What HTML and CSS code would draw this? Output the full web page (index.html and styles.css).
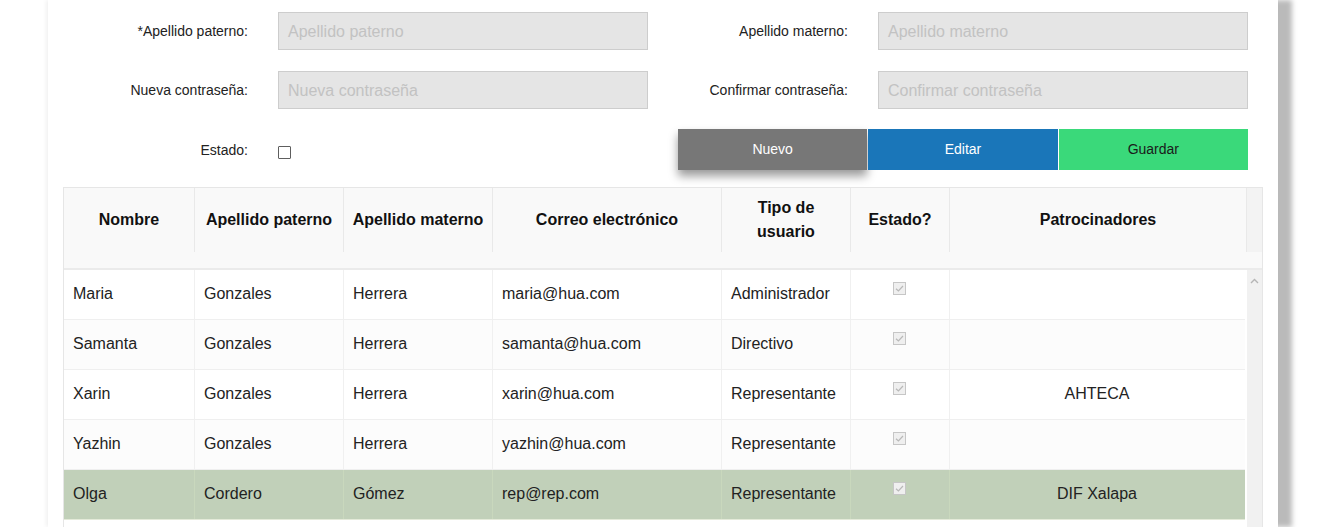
FILE: index.html
```html
<!DOCTYPE html>
<html lang="es">
<head>
<meta charset="utf-8">
<link rel="stylesheet" href="styles.css">
</head>
<body>
<div class="page">
  <div class="card">
    <div class="form">
      <label class="lbl">*Apellido paterno:</label>
      <div class="inp">Apellido paterno</div>
      <label class="lbl">Apellido materno:</label>
      <div class="inp">Apellido materno</div>

      <label class="lbl">Nueva contraseña:</label>
      <div class="inp">Nueva contraseña</div>
      <label class="lbl">Confirmar contraseña:</label>
      <div class="inp">Confirmar contraseña</div>

      <label class="lbl">Estado:</label>
      <div class="chkcell"><span class="chk"></span></div>
      <div class="btns">
        <div class="btn nuevo">Nuevo</div>
        <div class="btn editar">Editar</div>
        <div class="btn guardar">Guardar</div>
      </div>
    </div>

    <div class="table">
      <div class="thead">
        <div class="th">Nombre</div>
        <div class="th">Apellido paterno</div>
        <div class="th">Apellido materno</div>
        <div class="th">Correo electrónico</div>
        <div class="th">Tipo de<br>usuario</div>
        <div class="th">Estado?</div>
        <div class="th">Patrocinadores</div>
        <div class="th filler"></div>
      </div>
      <div class="tbody">
        <div class="rows">
          <div class="tr">
            <div class="td">Maria</div><div class="td">Gonzales</div><div class="td">Herrera</div><div class="td">maria@hua.com</div><div class="td">Administrador</div>
            <div class="td cbox"><span class="dchk"><svg viewBox="0 0 13 13" width="13" height="13"><path d="M3 6.8 L5.4 9 L10 4" fill="none" stroke="#b8b8b8" stroke-width="1.2"/></svg></span></div>
            <div class="td center"></div>
          </div>
          <div class="tr even">
            <div class="td">Samanta</div><div class="td">Gonzales</div><div class="td">Herrera</div><div class="td">samanta@hua.com</div><div class="td">Directivo</div>
            <div class="td cbox"><span class="dchk"><svg viewBox="0 0 13 13" width="13" height="13"><path d="M3 6.8 L5.4 9 L10 4" fill="none" stroke="#b8b8b8" stroke-width="1.2"/></svg></span></div>
            <div class="td center"></div>
          </div>
          <div class="tr">
            <div class="td">Xarin</div><div class="td">Gonzales</div><div class="td">Herrera</div><div class="td">xarin@hua.com</div><div class="td">Representante</div>
            <div class="td cbox"><span class="dchk"><svg viewBox="0 0 13 13" width="13" height="13"><path d="M3 6.8 L5.4 9 L10 4" fill="none" stroke="#b8b8b8" stroke-width="1.2"/></svg></span></div>
            <div class="td center">AHTECA</div>
          </div>
          <div class="tr even">
            <div class="td">Yazhin</div><div class="td">Gonzales</div><div class="td">Herrera</div><div class="td">yazhin@hua.com</div><div class="td">Representante</div>
            <div class="td cbox"><span class="dchk"><svg viewBox="0 0 13 13" width="13" height="13"><path d="M3 6.8 L5.4 9 L10 4" fill="none" stroke="#b8b8b8" stroke-width="1.2"/></svg></span></div>
            <div class="td center"></div>
          </div>
          <div class="tr sel">
            <div class="td">Olga</div><div class="td">Cordero</div><div class="td">Gómez</div><div class="td">rep@rep.com</div><div class="td">Representante</div>
            <div class="td cbox"><span class="dchk"><svg viewBox="0 0 13 13" width="13" height="13"><path d="M3 6.8 L5.4 9 L10 4" fill="none" stroke="#b8b8b8" stroke-width="1.2"/></svg></span></div>
            <div class="td center">DIF Xalapa</div>
          </div>
        </div>
        <div class="scroll">
          <svg class="arrow" viewBox="0 0 9 6" width="9" height="6"><path d="M1 5 L4.5 1.5 L8 5" fill="none" stroke="#b5b5b5" stroke-width="1.4"/></svg>
        </div>
      </div>
    </div>
  </div>
</div>
</body>
</html>
```

FILE: styles.css
```css
* { box-sizing: border-box; }
html, body { margin: 0; padding: 0; background: #fff; }
body {
  font-family: "Liberation Sans", Arial, sans-serif;
  color: #222;
  height: 527px;
  overflow: hidden;
}
.page {
  padding-left: 48px;
}
.card {
  width: 1230px;
  height: 527px;
  background: #fff;
  padding: 12px 15px 0 15px;
  box-shadow: 14px 0 5px rgba(0,0,0,0.27), -2px 0 4px rgba(0,0,0,0.06);
}
.form {
  display: grid;
  grid-template-columns: 185px 370px 170px 370px;
  column-gap: 30px;
  row-gap: 21px;
  margin-bottom: 17px;
}
.lbl {
  font-size: 14px;
  color: #222;
  text-align: right;
  align-self: center;
}
.inp {
  height: 38px;
  border: 1px solid #cdcdcd;
  background: #e5e5e5;
  color: #c2c2c2;
  font-size: 16px;
  padding: 1px 9px 0;
  display: flex;
  align-items: center;
}
.chkcell {
  display: flex;
  align-items: center;
  padding-top: 4px;
}
.chk {
  width: 13px;
  height: 13px;
  border: 1px solid #5e5e5e;
  background: #fff;
  border-radius: 1px;
}
.btns {
  grid-column: 3 / 5;
  display: flex;
  gap: 1px;
  margin-top: -1px;
}
.btn {
  flex: 1;
  height: 41px;
  display: flex;
  align-items: center;
  justify-content: center;
  font-size: 14px;
  padding-bottom: 1px;
}
.nuevo {
  background: #777777;
  color: #fff;
  box-shadow: 0 6px 9px rgba(0,0,0,0.4);
}
.editar { background: #1a76b9; color: #fff; }
.guardar { background: #3ad97a; color: #1a1a1a; }

.table {
  border: 1px solid #e6e6e6;
  border-bottom: none;
  width: 1200px;
}
.thead {
  display: grid;
  grid-template-columns: 131px 149px 149px 229px 129px 99px 297px 15px;
  background: #f9f9f9;
  padding-bottom: 16px;
  border-bottom: 2px solid #ebebeb;
}
.th {
  height: 64px;
  display: flex;
  align-items: center;
  justify-content: center;
  text-align: center;
  font-weight: bold;
  font-size: 16px;
  line-height: 24px;
  color: #111;
  border-right: 1px solid #e9e9e9;
}
.th.filler { border-right: none; background: #f3f3f3; }
.tbody {
  display: flex;
  height: 260px;
}
.rows { width: 1181px; }
.scroll {
  width: 15px;
  margin-left: 2px;
  background: #f1f1f1;
  display: flex;
  justify-content: center;
  padding-top: 8px;
}
.arrow { display: block; }
.tr {
  display: grid;
  grid-template-columns: 131px 149px 149px 229px 129px 99px 295px;
  height: 50px;
  border-bottom: 1px solid #efefef;
  background: #fff;
}
.tr.even { background: #fcfcfc; }
.tr.sel { background: #c1d0b9; border-bottom-color: #e4ead9; }
.td {
  font-size: 16px;
  padding: 0 10px 2px 9px;
  display: flex;
  align-items: center;
  border-right: 1px solid #f0f0f0;
  white-space: nowrap;
}
.tr.sel .td { border-right-color: #c9d8bd; }
.td:last-child { border-right: none; }
.td.center { justify-content: center; }
.td.cbox {
  justify-content: center;
  align-items: flex-start;
  padding-top: 12px;
}
.dchk {
  width: 13px;
  height: 13px;
  border: 1px solid #c6c6c6;
  background: #efefef;
  display: block;
  position: relative;
}
.dchk svg { position: absolute; left: -1px; top: -1px; }
```
